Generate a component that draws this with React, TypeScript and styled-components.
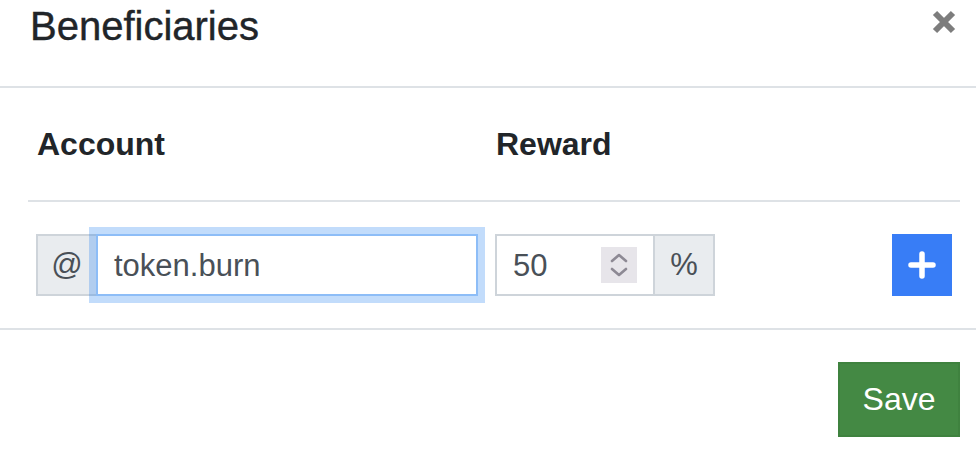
import React from "react";
import styled, { createGlobalStyle } from "styled-components";

const GlobalStyle = createGlobalStyle`
  html, body { margin: 0; padding: 0; background: #fff; }
  body {
    font-family: "Liberation Sans", Arial, sans-serif;
    color: #212529;
    -webkit-font-smoothing: antialiased;
  }
  * { box-sizing: border-box; }
`;

const Modal = styled.div`
  width: 976px;
  height: 456px;
  background: #fff;
  overflow: hidden;
`;

const Header = styled.div`
  height: 88px;
  display: flex;
  justify-content: space-between;
  align-items: flex-start;
  padding: 0 20px 0 30px;
  border-bottom: 2px solid #dee2e6;
`;

const Title = styled.h5`
  margin: 0;
  padding-top: 2px;
  font-size: 40px;
  font-weight: 500;
  line-height: 48px;
  color: #212529;
  -webkit-text-stroke: 0.4px #212529;
`;

const CloseButton = styled.button`
  margin-top: 10px;
  width: 24px;
  height: 24px;
  padding: 0;
  border: 0;
  background: transparent;
  display: flex;
  cursor: pointer;
`;

const Table = styled.div`
  margin: 0 16px 0 28px;
  display: grid;
  grid-template-columns: 459px 1fr auto;
`;

const HeadCell = styled.div`
  padding: 32px 8px 32px 9px;
  font-size: 32px;
  font-weight: 700;
  line-height: 48px;
  border-bottom: 2px solid #dee2e6;
`;

const Cell = styled.div<{ $end?: boolean }>`
  padding: 32px 8px;
  display: flex;
  justify-content: ${(p) => (p.$end ? "flex-end" : "flex-start")};
`;

const InputGroup = styled.div<{ $width: number }>`
  display: flex;
  width: ${(p) => p.$width}px;
  height: 62px;
`;

const Addon = styled.div<{ $side: "left" | "right" }>`
  width: 60px;
  flex: none;
  display: flex;
  align-items: center;
  justify-content: center;
  background: #e9ecef;
  border: 2px solid #ced4da;
  ${(p) => (p.$side === "left" ? "border-right: none;" : "border-left: none;")}
  font-size: 31px;
  color: #495057;
`;

const TextInput = styled.div<{ $focused?: boolean }>`
  flex: 1;
  position: relative;
  display: flex;
  align-items: center;
  padding: 2px 16px 0;
  font-size: 31px;
  color: #495057;
  background: #fff;
  border: 2px solid ${(p) => (p.$focused ? "#8dbdf7" : "#ced4da")};
  box-shadow: ${(p) => (p.$focused ? "0 0 0 7px rgba(0, 110, 240, 0.24)" : "none")};
  z-index: ${(p) => (p.$focused ? 1 : 0)};
`;

const Spinner = styled.div`
  margin-left: auto;
  margin-top: -2px;
  width: 36px;
  height: 36px;
  background: #e7e5ea;
  display: flex;
  align-items: center;
  justify-content: center;
`;

const AddButton = styled.button`
  width: 60px;
  height: 62px;
  border: 0;
  padding: 0;
  background: #387df6;
  display: flex;
  align-items: center;
  justify-content: center;
  cursor: pointer;
`;

const Footer = styled.div`
  border-top: 2px solid #dee2e6;
  padding: 32px 16px 0;
  display: flex;
  justify-content: flex-end;
`;

const SaveButton = styled.button`
  height: 75px;
  width: 122px;
  padding: 0;
  background: #448944;
  border: 2px solid #3f823f;
  color: #fff;
  font-family: "Liberation Sans", Arial, sans-serif;
  font-size: 32px;
  cursor: pointer;
`;

export default function App() {
  return (
    <>
      <GlobalStyle />
      <Modal>
        <Header>
          <Title>Beneficiaries</Title>
          <CloseButton aria-label="Close">
            <svg width="24" height="24" viewBox="0 0 24 24">
              <path d="M3 3 L21 21 M21 3 L3 21" stroke="#7d7d7d" strokeWidth="6" />
            </svg>
          </CloseButton>
        </Header>
        <Table>
          <HeadCell>Account</HeadCell>
          <HeadCell>Reward</HeadCell>
          <HeadCell />
          <Cell>
            <InputGroup $width={442}>
              <Addon $side="left">@</Addon>
              <TextInput $focused>token.burn</TextInput>
            </InputGroup>
          </Cell>
          <Cell>
            <InputGroup $width={220}>
              <TextInput>
                50
                <Spinner>
                  <svg width="20" height="28" viewBox="0 0 20 28">
                    <path
                      d="M3 10 L10 4 L17 10 M3 18 L10 24 L17 18"
                      fill="none"
                      stroke="#8d8994"
                      strokeWidth="2.6"
                      strokeLinecap="round"
                      strokeLinejoin="round"
                    />
                  </svg>
                </Spinner>
              </TextInput>
              <Addon $side="right">%</Addon>
            </InputGroup>
          </Cell>
          <Cell $end>
            <AddButton aria-label="Add">
              <svg width="28" height="28" viewBox="0 0 28 28">
                <path d="M14 3 V25 M3 14 H25" stroke="#fff" strokeWidth="5.5" strokeLinecap="round" />
              </svg>
            </AddButton>
          </Cell>
        </Table>
        <Footer>
          <SaveButton>Save</SaveButton>
        </Footer>
      </Modal>
    </>
  );
}
